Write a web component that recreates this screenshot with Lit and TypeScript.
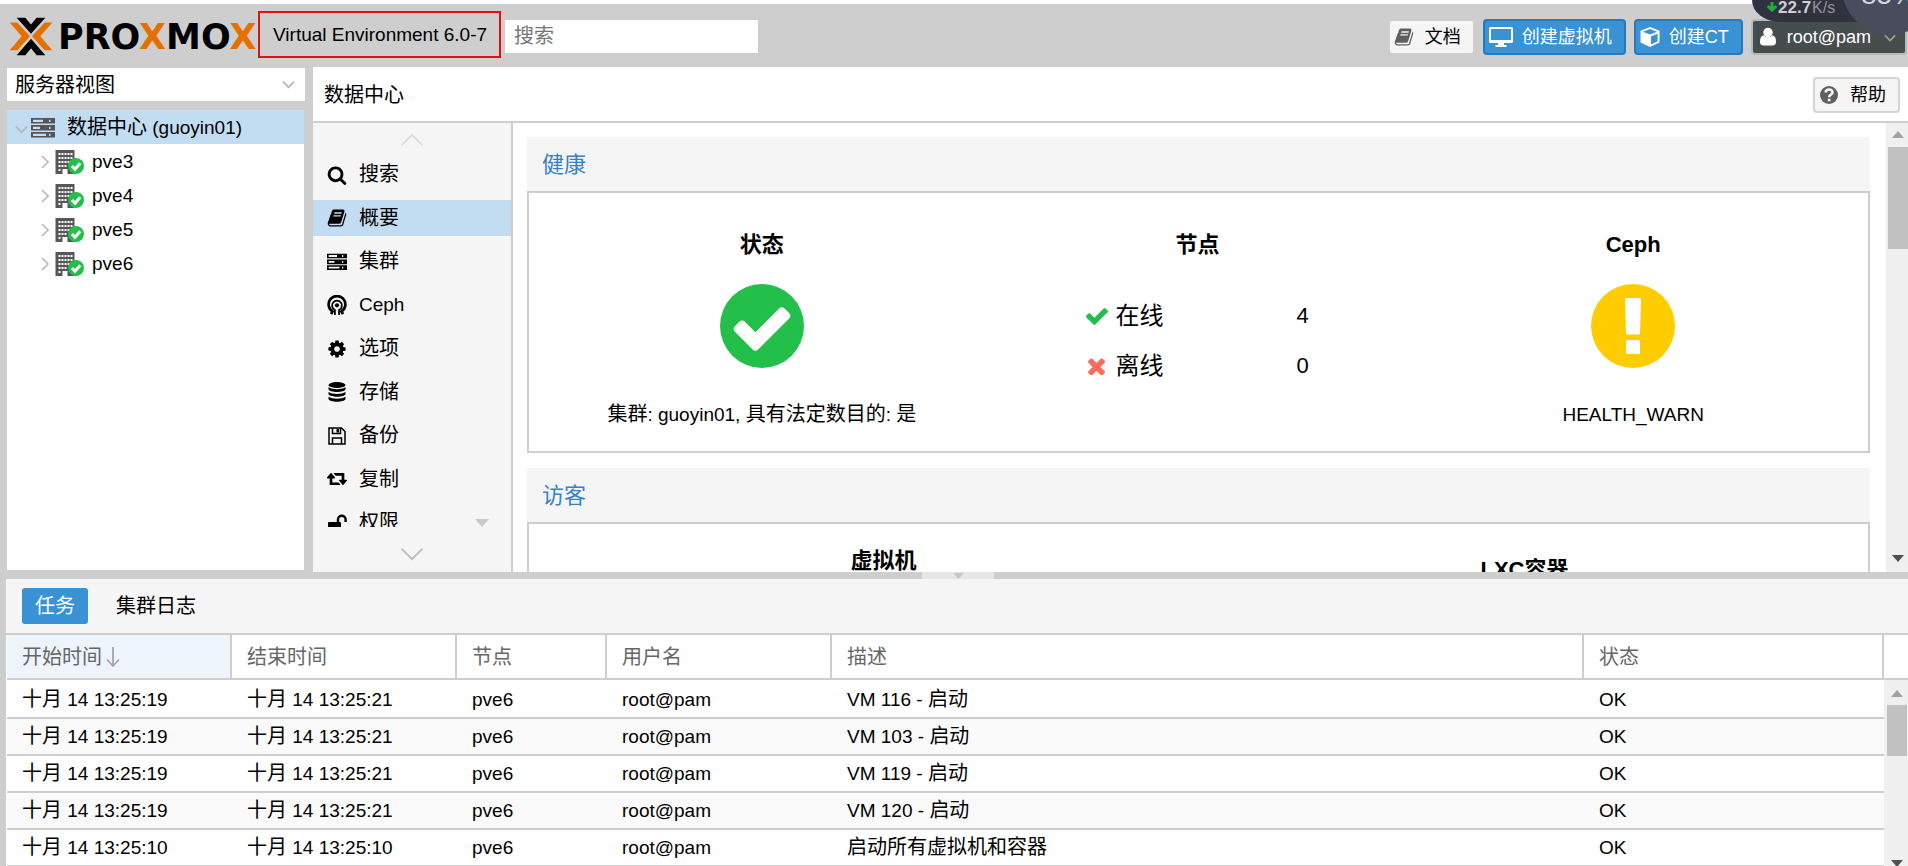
import { LitElement, html, css, svg, nothing } from "lit";
import { customElement, property } from "lit/decorators.js";
import { classMap } from "lit/directives/class-map.js";

const glyphs: Record<string, { box: string; art: unknown }> = {
  search: {
    box: "0 0 1792 1792",
    art: svg`<path d="M1216 832q0-185-131.5-316.5t-316.5-131.5-316.5 131.5-131.5 316.5 131.5 316.5 316.5 131.5 316.5-131.5 131.5-316.5zm512 832q0 52-38 90t-90 38q-54 0-90-38l-343-342q-179 124-399 124-143 0-273.5-55.5t-225-150-150-225-55.5-273.5 55.5-273.5 150-225 225-150 273.5-55.5 273.5 55.5 225 150 150 225 55.5 273.5q0 220-124 399l343 343q37 37 37 90z"/>`,
  },
  book: {
    box: "0 0 1792 1792",
    art: svg`<path d="M1703 478q40 57 18 129l-275 906q-19 64-76.5 107.5t-122.5 43.5h-923q-77 0-148.5-53.5t-99.5-131.5q-24-67-2-127 0-4 3-27t4-37q1-8-3-21.5t-3-19.5q2-11 8-21t16.5-23.5 16.5-23.5q23-38 45-91.5t30-91.5q3-10 .5-30t-.5-28q3-11 17-28t17-23q21-36 42-92t25-90q1-9-2.5-32t.5-28q4-13 22-30.5t22-22.5q19-26 42.5-84.5t27.5-96.5q1-8-3-25.5t-2-26.5q2-8 9-18t18-23 17-21q8-12 16.5-30.5t15-35 16-36 19.5-32 26.5-23.5 36-11.5 47.5 5.5l-1 3q38-9 51-9h761q74 0 114 56t18 130l-274 906q-36 119-71.5 153.5t-128.5 34.5h-869q-27 0-38 15-11 16-1 43 24 70 144 70h923q29 0 56-15.5t35-41.5l300-987q7-22 5-57 38 15 59 43zm-1064 2q-4 13 2 22.5t20 9.5h608q13 0 25.5-9.5t16.5-22.5l21-64q4-13-2-22.5t-20-9.5h-608q-13 0-25.5 9.5t-16.5 22.5zm-83 256q-4 13 2 22.5t20 9.5h608q13 0 25.5-9.5t16.5-22.5l21-64q4-13-2-22.5t-20-9.5h-608q-13 0-25.5 9.5t-16.5 22.5z"/>`,
  },
  server: {
    box: "0 0 24 20",
    art: svg`<path fill-rule="evenodd" d="M0 0h24v5.600H0zM2 1.700v2.200h10V1.700zM18 1.700v2.200h1.500V1.700zM0 7h24v5.600H0zM2 8.700v2.200h7V8.700zM18 8.700v2.200h1.500V8.700zM0 14h24v5.600H0zM2 15.700v2.200h13v-2.200zM18 15.700v2.200h1.500v-2.200z"/>`,
  },
  ceph: {
    box: "0 0 22 22",
    art: svg`<g fill="none" stroke="currentColor"><path stroke-width="3" d="M4.500 21l1.600-2.900A9.200 9.200 0 1 1 15.900 18.100L17.500 21"/><path stroke-width="2" d="M8.700 22v-5.500A5.400 5.400 0 1 1 13.300 16.500V22"/></g><circle cx="11" cy="11.400" r="2.300"/>`,
  },
  cog: {
    box: "0 0 1792 1792",
    art: svg`<path d="M1152 896q0-106-75-181t-181-75-181 75-75 181 75 181 181 75 181-75 75-181zm512-109v222q0 12-8 23t-20 13l-185 28q-19 54-39 91 35 50 107 138 10 12 10 25t-9 23q-27 37-99 108t-94 71q-12 0-26-9l-138-108q-44 23-91 38-16 136-29 186-7 28-36 28h-222q-14 0-24.5-8.5t-11.5-21.5l-28-184q-49-16-90-37l-141 107q-10 9-25 9-14 0-25-11-126-114-165-168-7-10-7-23 0-12 8-23 15-21 51-66.5t54-70.5q-27-50-41-99l-183-27q-13-2-21-12.5t-8-23.5v-222q0-12 8-23t19-13l186-28q14-46 39-92-40-57-107-138-10-12-10-24 0-10 9-23 26-36 98.5-107.5t94.5-71.5q13 0 26 10l138 107q44-23 91-38 16-136 29-186 7-28 36-28h222q14 0 24.5 8.5t11.5 21.5l28 184q49 16 90 37l142-107q9-9 24-9 13 0 25 10 129 119 165 170 7 8 7 22 0 12-8 23-15 21-51 66.5t-54 70.5q26 50 41 98l183 28q13 2 21 12.5t8 23.500z"/>`,
  },
  database: {
    box: "0 0 20 20",
    art: svg`<ellipse cx="10" cy="3" rx="8.500" ry="3"/><path d="M1.500 5.200c3.500 2.600 13.500 2.600 17 0v2.300c-1.500 3.300-15.500 3.300-17 0zM1.500 10c3.500 2.600 13.500 2.600 17 0v2.300c-1.500 3.300-15.500 3.300-17 0zM1.500 14.800c3.500 2.600 13.500 2.600 17 0v2.300c-1.500 3.600-15.500 3.600-17 0z"/>`,
  },
  floppy: {
    box: "0 0 20 20",
    art: svg`<path fill="none" stroke="currentColor" stroke-width="1.500" d="M2 2h12.500L18 5.500V18H2zM5.500 18v-6h9v6M5.500 2v5.500h8V2"/><path d="M9.500 3h2.500v3.500H9.500z"/>`,
  },
  retweet: {
    box: "0 256 1920 1400",
    art: svg`<path d="M1280 1504q0 13-9.5 22.5t-22.5 9.5h-960q-8 0-13.5-2t-9-7-5.5-8-3-11.5-1-11.5v-600h-192q-26 0-45-19t-19-45q0-24 15-41l320-384q19-22 49-22t49 22l320 384q15 17 15 41 0 26-19 45t-45 19h-192v384h576q16 0 25 11l160 192q7 10 7 21zm640-416q0 24-15 41l-320 384q-20 23-49 23t-49-23l-320-384q-15-17-15-41 0-26 19-45t45-19h192v-384h-576q-16 0-25-12l-160-192q-7-9-7-20 0-13 9.5-22.5t22.5-9.5h960q8 0 13.5 2t9 7 5.5 8 3 11.5 1 11.5v600h192q26 0 45 19t19 45z"/>`,
  },
  unlock: {
    box: "0 0 20 20",
    art: svg`<path fill="none" stroke="currentColor" stroke-width="2.400" d="M11 10V6.500a3.800 3.800 0 0 1 7.600 0V9"/><rect x="1" y="9" width="13" height="10" rx="1"/>`,
  },
  building: {
    box: "0 0 28 24",
    art: svg`<path fill="#575757" d="M0 0h19v24H0z"/><g fill="#fff"><path d="M3 3h2v2H3zM6 3h2v2H6zM9 3h2v2H9zM12 3h2v2h-2zM15 3h2v2h-2zM3 7h2v2H3zM6 7h2v2H6zM9 7h2v2H9zM12 7h2v2h-2zM15 7h2v2h-2zM3 11h2v2H3zM6 11h2v2H6zM9 11h2v2H9zM12 11h2v2h-2zM3 15h2v2H3zM6 15h2v2H6zM9 15h2v2H9zM3 19h2v2H3zM7 19h5v5H7z"/></g><circle cx="20.500" cy="16" r="8" fill="#23bf4b"/><path fill="none" stroke="#fff" stroke-width="3" d="M16.500 16l3 3.200 5.200-6"/>`,
  },
  desktop: {
    box: "0 0 24 20",
    art: svg`<path fill-rule="evenodd" d="M1.500 0h21q1.500 0 1.500 1.500v13q0 1.500-1.500 1.500H15v2h2.500v2h-11v-2H9v-2H1.500Q0 16 0 14.500v-13Q0 0 1.500 0zM2 2v11h20V2z"/>`,
  },
  cube: {
    box: "0 0 20 20",
    art: svg`<path fill-rule="evenodd" d="M10 0l9.500 3.800v11.700L10 20 .5 15.500V3.800zM10 2L3 4.800 10 7.600l7-2.800zM11 9.400v8l6.600-3.200V6.800z"/>`,
  },
  user: {
    box: "0 0 18 20",
    art: svg`<circle cx="9" cy="5.500" r="5.300"/><path d="M4 8.500q5 4.500 10 0 4 1 4 7.500 0 4-3.500 4h-11Q0 20 0 16q0-6.500 4-7.500z"/>`,
  },
  help: {
    box: "0 0 20 20",
    art: svg`<circle cx="10" cy="10" r="9"/><path fill="none" stroke="#f5f5f5" stroke-width="2.600" d="M6.500 7.500q.6-3 3.600-3 3.400.2 3.400 2.800 0 1.400-1.700 2.300-1.600.8-1.600 2.600"/><path fill="#f5f5f5" d="M8.800 13.700h2.700v2.600H8.800z"/>`,
  },
  check: {
    box: "121 334 1550 1188",
    art: svg`<path d="M1671 566q0 40-28 68l-724 724-136 136q-28 28-68 28t-68-28l-136-136-362-362q-28-28-28-68t28-68l136-136q28-28 68-28t68 28l294 295 656-657q28-28 68-28t68 28l136 136q28 28 28 68z"/>`,
  },
  times: {
    box: "302 334 1188 1188",
    art: svg`<path d="M1490 1322q0 40-28 68l-136 136q-28 28-68 28t-68-28l-294-294-294 294q-28 28-68 28t-68-28l-136-136q-28-28-28-68t28-68l294-294-294-294q-28-28-28-68t28-68l136-136q28-28 68-28t68 28l294 294 294-294q28-28 68-28t68 28l136 136q28 28 28 68t-28 68l-294 294 294 294q28 28 28 68z"/>`,
  },
  good: {
    box: "0 0 84 84",
    art: svg`<circle cx="42" cy="42" r="42" fill="#23bf4b"/><path fill="#fff" transform="translate(9.200 11) scale(.0366)" d="M1671 566q0 40-28 68l-724 724-136 136q-28 28-68 28t-68-28l-136-136-362-362q-28-28-28-68t28-68l136-136q28-28 68-28t68 28l294 295 656-657q28-28 68-28t68 28l136 136q28 28 28 68z"/>`,
  },
  warning: {
    box: "0 0 84 84",
    art: svg`<circle cx="42" cy="42" r="42" fill="#ffcc00"/><path fill="#fff" d="M35.500 14h13q1.500 0 1.500 1.500L49 49q0 1.500-1.500 1.500h-11Q35 50.500 35 49l-1-33.500q0-1.500 1.500-1.500z"/><rect x="35" y="56" width="14" height="14" rx="1.500" fill="#fff"/>`,
  },
  right: { box: "0 0 8 14", art: svg`<path fill="none" stroke="currentColor" stroke-width="1.600" d="M1 1l6 6-6 6"/>` },
  down: { box: "0 0 14 8", art: svg`<path fill="none" stroke="currentColor" stroke-width="2" d="M1 1l6 6 6-6"/>` },
  thinDown: { box: "0 0 14 8", art: svg`<path fill="none" stroke="currentColor" stroke-width="1.200" d="M1 1l6 6 6-6"/>` },
  up: { box: "0 0 14 8", art: svg`<path fill="none" stroke="currentColor" stroke-width="1.200" d="M1 7l6-6 6 6"/>` },
  solidDown: { box: "0 0 14 8", art: svg`<path d="M0 0h14L7 8z"/>` },
  solidUp: { box: "0 0 14 8", art: svg`<path d="M0 8h14L7 0z"/>` },
  sortDown: { box: "0 0 14 20", art: svg`<path fill="none" stroke="currentColor" stroke-width="1.800" d="M7 0v19M1 12.500l6 6.500 6-6.500"/>` },
  speed: { box: "0 0 10 10", art: svg`<path d="M3.500 0h3v4.500L9 3l1 2.500L5 10 0 5.500 1 3l2.500 1.500z"/>` },
  logo: {
    box: "26 26 132 116",
    art: svg`<g fill="#e57000"><path d="M28 42h23l38 41.500L51 125H28l36-41.500z"/><path d="M156 42h-23L95 83.500 133 125h23l-36-41.500z"/></g><path d="M49 28h26l17 20 17-20h26L92 76zM49 140h26l17-21 17 21h26L92 91z"/>`,
  },
};

@customElement("ui-icon")
export class UiIcon extends LitElement {
  @property() name = "";
  static styles = css`
    :host { display: block; flex: none; }
    svg { display: block; width: 100%; height: 100%; }
  `;
  render() {
    const g = glyphs[this.name];
    return g ? html`<svg viewBox=${g.box} fill="currentColor" aria-hidden="true">${g.art}</svg>` : nothing;
  }
}

/* Chinese runs are set one step larger than the Latin text around them. */
const mixed = (text: string) =>
  text
    .split(/([\u4e00-\u9fff]+)/)
    .filter((run) => run !== "")
    .map((run) => (/[\u4e00-\u9fff]/.test(run) ? html`<span class="cjk">${run}</span>` : run));

const nav = [
  { icon: "search", label: "搜索" },
  { icon: "book", label: "概要", active: true },
  { icon: "server", label: "集群" },
  { icon: "ceph", label: "Ceph" },
  { icon: "cog", label: "选项" },
  { icon: "database", label: "存储" },
  { icon: "floppy", label: "备份" },
  { icon: "retweet", label: "复制" },
  { icon: "unlock", label: "权限", more: true },
];

const tasks = [
  ["十月 14 13:25:19", "十月 14 13:25:21", "pve6", "root@pam", "VM 116 - 启动", "OK"],
  ["十月 14 13:25:19", "十月 14 13:25:21", "pve6", "root@pam", "VM 103 - 启动", "OK"],
  ["十月 14 13:25:19", "十月 14 13:25:21", "pve6", "root@pam", "VM 119 - 启动", "OK"],
  ["十月 14 13:25:19", "十月 14 13:25:21", "pve6", "root@pam", "VM 120 - 启动", "OK"],
  ["十月 14 13:25:10", "十月 14 13:25:10", "pve6", "root@pam", "启动所有虚拟机和容器", "OK"],
];

@customElement("app-root")
export class AppRoot extends LitElement {
  static styles = css`
    :host {
      display: flex; flex-direction: column; height: 100vh; overflow: hidden;
      background: #cecece; color: #000;
      font: 19px/24px "Liberation Sans", "Noto Sans CJK SC", sans-serif;
    }
    * { box-sizing: border-box; }
    button, input, select { font: inherit; color: inherit; margin: 0; }
    button { cursor: pointer; }
    ul { list-style: none; margin: 0; padding: 0; }
    h1, h2, h3, p { margin: 0; font-weight: 400; }
    .cjk { font-size: 20px; }

    header {
      position: relative; flex: none; display: flex; align-items: center; height: 67px;
      border-top: 4px solid #fff; padding: 2px 1px 0 9px;
    }
    .mark { width: 44px; height: 39px; }
    .word { width: 205px; padding-left: 5px; font: 700 35px/40px "DejaVu Sans", sans-serif; white-space: nowrap; color: #000; }
    .word span { color: #e57000; }
    .version { border: 2px solid #e11010; height: 47px; margin-bottom: 4px; line-height: 33px; padding: 5px 12px 0 13px; white-space: nowrap; }
    .find { width: 253px; height: 33px; margin-left: 4px; border: 0; border-radius: 0; padding: 0 9px; background: #fff; font-size: 20px; }
    .find::placeholder { color: #767676; opacity: 1; }
    .spacer { flex: 1; }
    .actions { display: flex; gap: 8px; }
    .btn {
      display: flex; align-items: center; gap: 9px; height: 36px; padding: 0 12px 0 4px; font-size: 18px;
      border: 2px solid #d4d4d4; border-radius: 4px; background: #f5f5f5; white-space: nowrap;
    }
    .btn ui-icon { width: 20px; height: 20px; color: #5f5f5f; }
    .btn.docs { border-color: #cecece; }
    .btn.docs ui-icon, .btn.help ui-icon { margin-right: 2px; }
    .btn.primary { background: #3892d4; border-color: #2579bd; color: #fff; }
    .btn.primary ui-icon { color: #fff; }
    .btn.primary ui-icon.wide { width: 24px; }
    .btn.user { background: #464d4d; border-color: #b3bcbc; color: #fff; padding: 0 9px 0 7px; }
    .btn.user ui-icon { width: 16px; height: 19px; color: #fff; margin-right: 2px; }
    .btn.user ui-icon.caret { width: 12px; height: 8px; color: #99a0a0; margin: 2px 0 0 4px; }

    .meter {
      position: absolute; top: -4px; right: 0; width: 156px; height: 22px;
      border-bottom-left-radius: 28px 22px; background: #30333f; color: #cfd0d4;
      display: flex; padding: 0 0 0 15px; gap: 1px; font: 16px/16px "Liberation Sans", sans-serif;
    }
    .meter b { font-size: 17px; }
    .meter span { color: #8f939c; }
    .meter ui-icon { width: 10px; height: 10px; color: #1fae3c; margin-top: 2px; }
    .load {
      position: absolute; right: 0; top: 0; width: 65px; height: 35px; overflow: hidden;
      background: radial-gradient(circle at 47px -14px, #484c5c 0 48px, transparent 49px);
      font: 28px/28px "Liberation Sans", sans-serif;
    }
    .load span { display: block; margin: -19px 0 0 18px; white-space: nowrap; color: #d4d6dc; }

    .body { flex: 1; min-height: 0; display: flex; gap: 8px; padding-left: 7px; }
    .side { flex: none; width: 298px; display: flex; flex-direction: column; gap: 9px; padding: 1px 0 2px; }
    .view { position: relative; flex: none; }
    .view select {
      appearance: none; display: block; width: 100%; height: 33px; border: 0; border-radius: 0;
      background: #fff; padding: 1px 8px 0; font-size: 20px;
    }
    .view ui-icon { position: absolute; right: 10px; top: 12px; width: 13px; height: 9px; color: #b5b5b5; pointer-events: none; }
    .tree { flex: 1; background: #fff; margin-right: 1px; }
    .node { display: flex; align-items: center; height: 34px; padding: 1px 0 0 34px; }
    .node.root { background: #c2ddf2; padding-left: 8px; }
    .node.root ui-icon.fold { width: 13px; height: 9px; margin: 4px 3px 0 0; }
    .node.root ui-icon.srv { width: 24px; height: 20px; margin-right: 12px; color: #555; }
    .node ui-icon.fold { width: 8px; height: 14px; color: #b9b9b9; margin-right: 6px; }
    .node ui-icon.host { width: 29px; height: 24px; margin-right: 8px; }

    .main { flex: 1; min-width: 0; display: flex; flex-direction: column; background: #fff; }
    .crumb { flex: none; display: flex; align-items: center; justify-content: space-between; height: 56px; border-bottom: 2px solid #cecece; padding: 1px 8px 0 11px; }
    .work { flex: 1; min-height: 0; display: flex; }
    .nav { flex: none; width: 200px; background: #f5f5f5; border-right: 2px solid #cecece; display: flex; flex-direction: column; }
    .roll { flex: none; display: flex; align-items: center; justify-content: center; width: 100%; border: 0; background: none; padding: 0; height: 33px; color: #dcdcdc; }
    .roll ui-icon { width: 24px; height: 14px; }
    .roll.next { height: 45px; color: #bdbdbd; padding-top: 9px; }
    .window { flex: 1; min-height: 0; overflow: hidden; }
    .items { height: 384px; display: flex; flex-direction: column; justify-content: space-between; }
    .item { display: flex; align-items: center; gap: 12px; height: 36px; padding: 1px 0 0 14px; color: inherit; text-decoration: none; }
    .item.active { background: #c2ddf2; }
    .item ui-icon { width: 20px; height: 20px; }
    .item ui-icon.more { width: 14px; height: 8px; color: #c9c9c9; margin-left: 64px; }

    .content { flex: 1; min-width: 0; overflow: hidden; padding: 14px 16px 0 14px; display: flex; flex-direction: column; gap: 15px; }
    .card { flex: none; }
    .card h2 { height: 54px; padding: 1px 15px 0; background: #f5f5f5; color: #3581c5; font-size: 22px; line-height: 54px; }
    .panel { border: 2px solid #cecece; display: grid; grid-template-columns: repeat(3, 1fr); padding: 36px 17px 24px 15px; background: #fff; }
    .panel h3 { font-weight: 700; font-size: 22px; line-height: 31px; text-align: center; }
    .stat { display: flex; flex-direction: column; align-items: center; }
    .stat ui-icon.big { width: 84px; height: 84px; margin: 24px 0 34px; }
    .stat .note { line-height: 25px; white-space: nowrap; }
    .counts { display: grid; grid-template-columns: 29px 181px auto; row-gap: 20px; align-items: center; padding: 41px 0 0; width: 222px; font-size: 24px; line-height: 30px; }
    .counts .num { font-size: 22px; }
    .counts ui-icon { width: 22px; height: 17px; color: #23bf4b; }
    .counts ui-icon.bad { width: 17px; height: 17px; color: #ff6c59; margin-left: 2px; }
    .guests { grid-template-columns: 679px 1fr; padding: 21px 42px 40px 15px; }
    .guests h3.low { padding-top: 9px; }

    .scroll { flex: none; display: flex; flex-direction: column; align-items: center; width: 22px; background: #f0f0f0; color: #a3a3a3; padding: 8px 0 10px 2px; }
    .scroll ui-icon { width: 12px; height: 7px; }
    .scroll .thumb { width: 20px; height: 102px; background: #c1c1c1; margin: 9px 0 auto; }
    .scroll .end { color: #505050; }

    .split { flex: none; display: flex; justify-content: center; height: 7px; padding-left: 8px; }
    .split button { display: flex; justify-content: center; width: 72px; height: 7px; padding: 1px 0 0; border: 0; background: #e6e6e6; color: #c6c6c6; }
    .split ui-icon { width: 13px; height: 6px; }

    .log { flex: none; height: 287px; margin-left: 6px; background: #fff; display: flex; flex-direction: column; overflow: hidden; }
    .tabs { flex: none; display: flex; gap: 15px; align-items: center; height: 56px; padding: 0 16px; background: #f5f5f5; border-bottom: 2px solid #cecece; }
    .tab { height: 36px; padding: 0 13px; border: 0; border-radius: 3px; background: none; font-size: 20px; }
    .tab.on { background: #3892d4; color: #fff; }
    .rows { flex: 1; min-height: 0; display: flex; padding-left: 1px; }
    table { flex: 1; min-width: 0; align-self: flex-start; border-collapse: separate; border-spacing: 0; table-layout: fixed; }
    .c-time, .c-user { width: 225px; }
    .c-node { width: 150px; }
    .c-state { width: 300px; }
    th { height: 45px; padding: 0 14px 0 15px; text-align: left; font-weight: 400; font-size: 20px; color: #666; border-right: 2px solid #cecece; border-bottom: 2px solid #cecece; }
    th.sorted { background: #edf4fb; }
    th div { display: flex; align-items: center; gap: 4px; }
    th ui-icon { width: 14px; height: 22px; color: #a5a5a5; }
    td { height: 37px; padding: 0 14px 0 15px; line-height: 24px; border-bottom: 2px solid #cecece; white-space: nowrap; overflow: hidden; }
    tbody tr:nth-child(even) { background: #fafafa; }
    tbody tr:first-child td { height: 39px; padding-top: 2px; }
    .gutter { flex: none; width: 24px; display: flex; flex-direction: column; }
    .gutter .cap { flex: none; height: 45px; border-bottom: 2px solid #cecece; }
    .gutter .scroll { flex: 1; width: 24px; padding: 10px 0 0 2px; }
    .gutter .thumb { height: 51px; margin: 8px 0 auto; }
    .gutter .end { height: 7px; margin-bottom: -1px; }
  `;

  private guestNode(name: string) {
    return html`<li class="node">
      <ui-icon class="fold" name="right"></ui-icon><ui-icon class="host" name="building"></ui-icon>${name}
    </li>`;
  }

  render() {
    return html`
      <header>
        <ui-icon class="mark" name="logo"></ui-icon>
        <div class="word">PRO<span>X</span>MO<span>X</span></div>
        <div class="version">Virtual Environment 6.0-7</div>
        <input class="find" type="text" placeholder="搜索" aria-label="搜索" />
        <div class="spacer"></div>
        <div class="actions">
          <button class="btn docs"><ui-icon name="book"></ui-icon>文档</button>
          <button class="btn primary"><ui-icon class="wide" name="desktop"></ui-icon>创建虚拟机</button>
          <button class="btn primary"><ui-icon name="cube"></ui-icon>创建CT</button>
          <button class="btn user"><ui-icon name="user"></ui-icon>root@pam<ui-icon class="caret" name="down"></ui-icon></button>
        </div>
        <div class="meter">
          <ui-icon name="speed"></ui-icon><b>22.7</b><span>K/s</span>
          <div class="load"><span>85%</span></div>
        </div>
      </header>

      <div class="body">
        <div class="side">
          <div class="view">
            <select aria-label="视图"><option>服务器视图</option></select>
            <ui-icon name="down"></ui-icon>
          </div>
          <ul class="tree">
            <li class="node root">
              <ui-icon class="fold" name="down"></ui-icon><ui-icon class="srv" name="server"></ui-icon>
              <span>${mixed("数据中心 (guoyin01)")}</span>
            </li>
            ${["pve3", "pve4", "pve5", "pve6"].map((n) => this.guestNode(n))}
          </ul>
        </div>

        <div class="main">
          <div class="crumb">
            <h1 class="cjk">数据中心</h1>
            <button class="btn help"><ui-icon name="help"></ui-icon>帮助</button>
          </div>
          <div class="work">
            <nav class="nav">
              <button class="roll" aria-label="向上"><ui-icon name="up"></ui-icon></button>
              <div class="window">
                <div class="items">
                  ${nav.map(
                    (i) => html`<a href="#" class=${classMap({ item: true, active: !!i.active })}>
                      <ui-icon name=${i.icon}></ui-icon>
                      <span>${mixed(i.label)}</span>
                      ${i.more ? html`<ui-icon class="more" name="solidDown"></ui-icon>` : nothing}
                    </a>`
                  )}
                </div>
              </div>
              <button class="roll next" aria-label="向下"><ui-icon name="thinDown"></ui-icon></button>
            </nav>
            <div class="content">
              <section class="card">
                <h2>健康</h2>
                <div class="panel">
                  <div class="stat">
                    <h3>状态</h3>
                    <ui-icon class="big" name="good"></ui-icon>
                    <p class="note">${mixed("集群: guoyin01, 具有法定数目的: 是")}</p>
                  </div>
                  <div class="stat">
                    <h3>节点</h3>
                    <div class="counts">
                      <ui-icon name="check"></ui-icon><span>在线</span><span class="num">4</span>
                      <ui-icon class="bad" name="times"></ui-icon><span>离线</span><span class="num">0</span>
                    </div>
                  </div>
                  <div class="stat">
                    <h3>Ceph</h3>
                    <ui-icon class="big" name="warning"></ui-icon>
                    <p class="note">HEALTH_WARN</p>
                  </div>
                </div>
              </section>
              <section class="card">
                <h2>访客</h2>
                <div class="panel guests">
                  <h3>虚拟机</h3>
                  <h3 class="low">LXC容器</h3>
                </div>
              </section>
            </div>
            <div class="scroll">
              <ui-icon name="solidUp"></ui-icon>
              <div class="thumb"></div>
              <ui-icon class="end" name="solidDown"></ui-icon>
            </div>
          </div>
        </div>
      </div>

      <div class="split"><button aria-label="折叠"><ui-icon name="solidDown"></ui-icon></button></div>

      <section class="log">
        <div class="tabs">
          <button class="tab on">任务</button>
          <button class="tab">集群日志</button>
        </div>
        <div class="rows">
          <table>
            <colgroup>
              <col class="c-time" /><col class="c-time" /><col class="c-node" /><col class="c-user" /><col /><col class="c-state" />
            </colgroup>
            <thead>
              <tr>
                <th class="sorted"><div>开始时间<ui-icon name="sortDown"></ui-icon></div></th>
                <th>结束时间</th><th>节点</th><th>用户名</th><th>描述</th><th>状态</th>
              </tr>
            </thead>
            <tbody>
              ${tasks.map((t) => html`<tr>${t.map((c) => html`<td>${mixed(c)}</td>`)}</tr>`)}
            </tbody>
          </table>
          <div class="gutter">
            <div class="cap"></div>
            <div class="scroll">
              <ui-icon name="solidUp"></ui-icon>
              <div class="thumb"></div>
              <ui-icon class="end" name="solidDown"></ui-icon>
            </div>
          </div>
        </div>
      </section>
    `;
  }
}
